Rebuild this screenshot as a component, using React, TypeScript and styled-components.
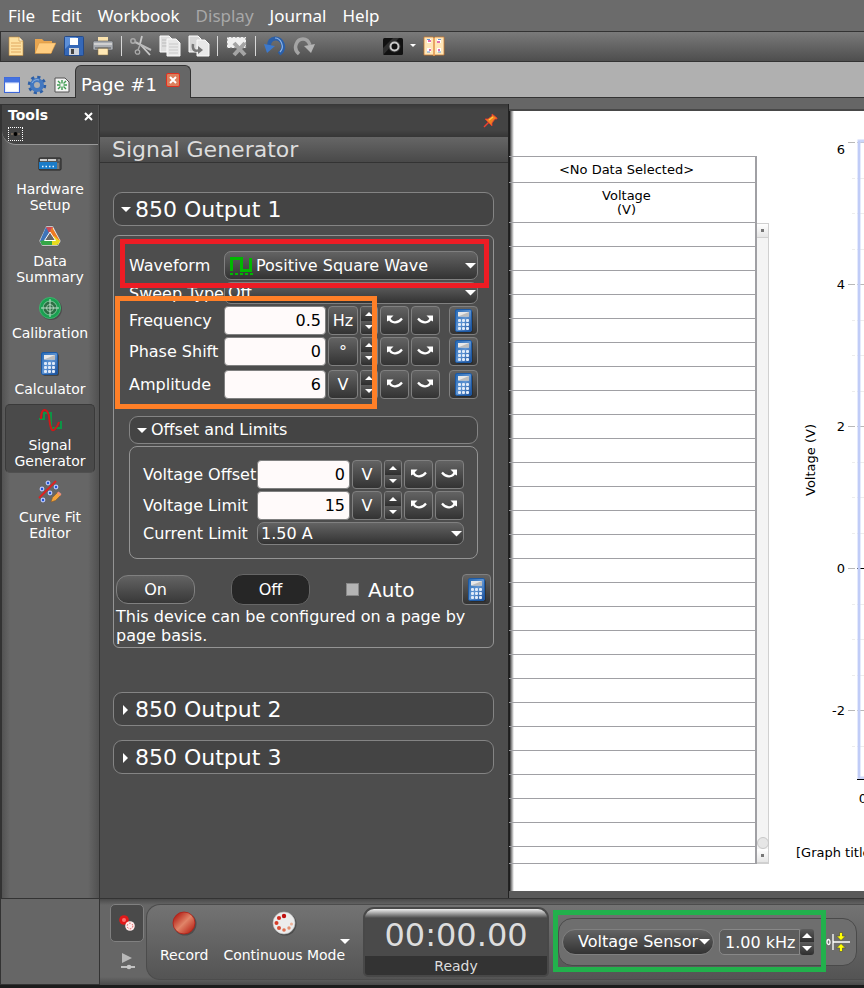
import React from "react";
import styled, { createGlobalStyle, css } from "styled-components";

const GlobalStyle = createGlobalStyle`
  * { box-sizing: border-box; }
  body {
    margin: 0;
    background: #333;
    color: #fff;
    font: 16px/19px "DejaVu Sans", sans-serif;
  }
  button, input, select { font: inherit; color: inherit; margin: 0; }
  svg { display: block; flex: none; }
`;

const raised = css`
  background: linear-gradient(#636363, #333);
  border: 1px solid #808080;
`;

/* ---------- page frame ---------- */

const Page = styled.div`
  display: flex;
  flex-direction: column;
  min-height: 100vh;
  overflow: hidden;
`;

const MenuBar = styled.nav`
  display: flex;
  gap: 16px;
  height: 31px;
  padding: 1px 8px 0;
  background: #6b6b6b;
`;

const MenuItem = styled.button`
  padding: 0;
  border: 0;
  background: none;
  font: 17px/28px "Noto Sans", "Open Sans", sans-serif;
  color: #fff;
  &:disabled { color: #a8a8a8; }
`;

const ToolBar = styled.div`
  display: flex;
  align-items: center;
  gap: 4px;
  height: 31px;
  padding: 0 2px 2px;
  border: 1px solid #333;
  border-right: 0;
  background: linear-gradient(#7a7a7a, #4e4e4e);
`;

const IconButton = styled.button<{ $narrow?: boolean }>`
  display: flex;
  justify-content: center;
  width: ${(p) => (p.$narrow ? 8 : 25)}px;
  padding: 0;
  border: 0;
  background: none;
`;

const Separator = styled.span`
  width: 1px;
  height: 20px;
  margin: 0 2px;
  background: #d8d8d8;
`;

const Spacer = styled.span`
  width: 56px;
`;

const TabBar = styled.div`
  display: flex;
  align-items: flex-end;
  height: 36px;
  padding-left: 3px;
  border-bottom: 1px solid #333;
  background: #b0b0b0;
`;

const TabTools = styled.div`
  display: flex;
  align-items: center;
  gap: 6px;
  width: 72px;
  height: 24px;
`;

const Tab = styled.div`
  display: flex;
  gap: 9px;
  height: 33px;
  margin-bottom: -1px;
  padding: 7px 10px 0 5px;
  border: 1px solid #333;
  border-bottom: 0;
  border-radius: 6px 6px 0 0;
  background: #666;
  font-size: 18px;
  line-height: 24px;
`;

const TabClose = styled.button`
  width: 14px;
  height: 14px;
  padding: 0;
  border: 1px solid #e03020;
  border-radius: 2px;
  background: #dc7f5c;
`;

const Workspace = styled.main`
  display: flex;
  flex: 1;
  min-height: 0;
  border-top: 6px solid #666;
`;

/* ---------- tools column ---------- */

const Tools = styled.aside`
  flex: 0 0 100px;
  padding: 0 1px 0 2px;
  border-top: 1px solid #333;
  border-right: 1px solid #333;
  background: linear-gradient(90deg, #333 2px, #535353 2px, #666 10px, #666 88px, #535353 98px);
`;

const ToolsHeader = styled.header`
  display: grid;
  grid-template-columns: 1fr auto;
  height: 40px;
  padding: 1px 5px 0 6px;
  border-bottom: 1px solid #999;
  border-bottom-left-radius: 14px;
  background: #444;
  font-weight: bold;
  font-size: 14px;
  line-height: 18px;
`;

const PlainButton = styled.button`
  display: flex;
  align-items: center;
  padding: 0;
  border: 0;
  background: none;
`;

const DottedBox = styled.span`
  width: 15px;
  height: 14px;
  padding: 4px 2px;
  border: 1px dotted #fff;
`;

const ToolList = styled.div`
  display: flex;
  flex-direction: column;
  gap: 3px;
  padding: 3px;
`;

const ToolButton = styled.button<{ $active?: boolean }>`
  display: flex;
  flex-direction: column;
  align-items: center;
  gap: 5px;
  padding: 3px 0;
  border: 1px solid ${(p) => (p.$active ? "#3a3a3a" : "transparent")};
  border-bottom-color: ${(p) => (p.$active ? "#505050" : "transparent")};
  border-radius: 5px;
  background: ${(p) => (p.$active ? "#4a4a4a" : "none")};
  font-size: 14px;
  line-height: 16px;
`;

/* ---------- signal generator panel ---------- */

const Panel = styled.section`
  flex: 0 0 409px;
  min-width: 0;
  border-right: 1px solid #222;
  background: #4d4d4d;
`;

const PanelTop = styled.div`
  display: flex;
  justify-content: flex-end;
  align-items: center;
  height: 33px;
  padding-right: 10px;
  background: linear-gradient(#383838, #444 6px, #444 26px, #363636);
`;

const PanelTitle = styled.h1`
  height: 26px;
  margin: 0;
  padding-left: 12px;
  border-bottom: 1px solid #333;
  background: linear-gradient(#666, #494949);
  color: #ddd;
  font-weight: normal;
  font-size: 22px;
  line-height: 26px;
`;

const PanelBody = styled.div`
  display: flex;
  flex-direction: column;
  padding: 29px 14px 0 13px;
`;

const Disclosure = styled.button<{ $small?: boolean }>`
  display: flex;
  align-items: center;
  gap: 4px;
  width: 100%;
  height: ${(p) => (p.$small ? 28 : 34)}px;
  padding: ${(p) => (p.$small ? 0 : 1)}px 7px 0;
  border: 1px solid #848484;
  border-radius: 9px;
  background: #444;
  font-size: ${(p) => (p.$small ? 16 : 22)}px;
  line-height: 26px;
`;

const Group = styled.div`
  position: relative;
  height: 413px;
  margin: 9px 0 44px;
  padding: 15px 15px 0;
  border: 1px solid #949494;
  border-radius: 6px;
`;

const SubGroup = styled.div`
  display: flex;
  flex-direction: column;
  gap: 2px;
  height: 113px;
  margin-top: 2px;
  padding: 13px;
  border: 1px solid #949494;
  border-radius: 8px;
`;

const Stack = styled.div`
  display: flex;
  flex-direction: column;
  gap: 2px;
  margin-bottom: 17px;
`;

const Row = styled.div<{ $spaced?: boolean }>`
  display: flex;
  align-items: center;
  gap: 2px;
  margin-top: ${(p) => (p.$spaced ? 2 : 0)}px;
`;

const Label = styled.label<{ $wide?: boolean }>`
  flex: none;
  width: ${(p) => (p.$wide ? 112 : 93)}px;
  white-space: nowrap;
`;

const SelectBox = styled.div<{ $height: number; $pill?: boolean }>`
  display: grid;
  flex: 1;
  align-items: center;
  height: ${(p) => p.$height}px;
  ${raised}
  border-radius: ${(p) => (p.$pill ? 13 : 7)}px;
  & > * { grid-area: 1 / 1; }
  & > svg { pointer-events: none; }
`;

const Select = styled.select<{ $indent: number }>`
  appearance: none;
  width: 100%;
  height: 20px;
  padding: 0 12px 0 ${(p) => p.$indent}px;
  border: 0;
  outline: 0;
  background: none;
  line-height: 20px;
  option { background: #444; }
`;

const SelectArrow = styled.svg`
  justify-self: end;
`;

const WaveIcon = styled.svg`
  margin-left: 5px;
`;

const NumberField = styled.input`
  flex: 1;
  width: 0;
  min-width: 0;
  height: 29px;
  padding: 0 4px;
  border: 1px solid #808080;
  border-radius: 4px;
  outline: 0;
  background: #fffafa;
  color: #000;
  text-align: right;
`;

const Square = styled.button<{ $gap?: boolean; $tall?: boolean }>`
  display: flex;
  flex: none;
  align-items: center;
  justify-content: center;
  width: 29px;
  height: ${(p) => (p.$tall ? 31 : 29)}px;
  margin-left: ${(p) => (p.$gap ? 7 : 0)}px;
  padding: 0;
  ${raised}
  border-radius: 4px;
`;

const Unit = styled(Square)`
  width: 30px;
`;

const SpinBox = styled.span<{ $wide?: boolean }>`
  display: flex;
  flex: none;
  flex-direction: column;
  width: ${(p) => (p.$wide ? 14 : 18)}px;
  height: ${(p) => (p.$wide ? 26 : 29)}px;
  border: ${(p) => (p.$wide ? "0" : "1px solid #808080")};
  border-radius: 3px;
  overflow: hidden;
`;

const SpinButton = styled.button`
  display: flex;
  flex: 1;
  align-items: center;
  justify-content: center;
  padding: 0;
  border: 0;
  background: linear-gradient(#5c5c5c, #2e2e2e);
`;

const Actions = styled.div`
  display: flex;
  align-items: center;
  margin: 15px -13px 0;
`;

const PillButton = styled.button<{ $pressed?: boolean }>`
  width: 79px;
  height: ${(p) => (p.$pressed ? 31 : 29)}px;
  margin-right: 36px;
  padding: 0;
  border: 1px solid ${(p) => (p.$pressed ? "#666" : "#808080")};
  border-radius: 12px;
  background: ${(p) => (p.$pressed ? "#262626" : "linear-gradient(#636363, #383838)")};
`;

const CheckLabel = styled.label`
  display: flex;
  flex: 1;
  align-items: center;
  gap: 9px;
  font-size: 20px;
  line-height: 24px;
`;

const Checkbox = styled.input`
  appearance: none;
  width: 13px;
  height: 13px;
  border: 1px solid #888;
  background: #b4b4b4;
`;

const Note = styled.p`
  margin: 2px -13px 0;
`;

const Outputs = styled.div`
  display: flex;
  flex-direction: column;
  gap: 14px;
`;

/* coloured frames that lie over the controls they point out */
const Frame = styled.span<{ $color: string }>`
  position: absolute;
  border: 5px solid ${(p) => p.$color};
  pointer-events: none;
`;

const WaveFrame = styled(Frame)`
  top: 3px;
  left: 6px;
  right: 4px;
  height: 49px;
`;

const ValuesFrame = styled(Frame)`
  top: 60px;
  left: 1px;
  width: 262px;
  height: 113px;
`;

const RateFrame = styled(Frame)`
  inset: -9px 30px -7px -6px;
`;

/* ---------- page canvas ---------- */

const Canvas = styled.section`
  display: flex;
  flex: 1;
  min-width: 0;
  overflow: hidden;
  border-top: 2px solid #484848;
  border-bottom: 7px solid #5a5a5a;
  background: linear-gradient(90deg, #000, #777 2px, #fff 5px);
  margin-top: 5px;
  box-shadow: 0 -5px 0 #666;
  color: #000;
  font-size: 13px;
  line-height: 14px;
`;

const DataTable = styled.table`
  flex: none;
  width: 259px;
  height: 708px;
  margin: 45px 0 0 -11px;
  border-collapse: collapse;
  border-right: 2px solid #a0a0a4;
  align-self: flex-start;
  th, td { padding: 0; border-top: 1px solid #a0a0a4; border-bottom: 1px solid #a0a0a4; font-weight: normal; }
`;

const TableRow = styled.tr<{ $height: number }>`
  height: ${(p) => p.$height}px;
`;

const ScrollTrack = styled.div`
  display: flex;
  flex: none;
  flex-direction: column;
  align-items: center;
  width: 12px;
  height: 641px;
  margin-top: 112px;
  border: 1px solid #d0d0d0;
  border-left: 0;
  background: #f4f4f4;
`;

const ScrollEnd = styled.button`
  display: flex;
  align-items: center;
  justify-content: center;
  width: 100%;
  height: 14px;
  padding: 0;
  border: 0;
  border-bottom: 1px solid #d0d0d0;
  background: linear-gradient(#fff, #e6e6e6);
`;

const ScrollThumb = styled.span`
  width: 12px;
  height: 12px;
  margin-top: auto;
  border: 1px solid #c8c8c8;
  border-radius: 6px;
  background: #e6e6e6;
`;

const Graph = styled.figure`
  flex: 1;
  min-width: 0;
  margin: 0;
  overflow: hidden;
  text { font-size: 13px; }
`;

const GraphTitle = styled.figcaption`
  padding: 35px 0 0 27px;
  white-space: nowrap;
`;

/* ---------- control bar ---------- */

const ControlBar = styled.footer`
  display: flex;
  height: 90px;
  border-top: 1px solid #333;
  border-bottom: 3px solid #1c1c1c;
`;

const Corner = styled.div`
  flex: 0 0 100px;
  border: 1px solid #333;
  border-top: 0;
  background: #666;
`;

const Controls = styled.div`
  display: flex;
  flex: 1;
  min-width: 0;
  padding: 5px 0 5px 10px;
  background: linear-gradient(#4a4a4a, #666 6px, #666 78px, #4a4a4a);
`;

const ModeColumn = styled.div`
  display: flex;
  flex-direction: column;
  align-items: center;
  gap: 9px;
  width: 36px;
`;

const ModeButton = styled.button`
  display: flex;
  align-items: center;
  justify-content: center;
  width: 34px;
  height: 38px;
  margin-right: 2px;
  border: 1px solid #808080;
  border-radius: 5px;
  background: #4a4a4a;
  padding: 0;
`;

const RecordGroup = styled.div`
  display: flex;
  flex: 1;
  min-width: 0;
  align-items: flex-start;
  border: 1px solid #4c4c4c;
  border-right: 0;
  border-radius: 14px 0 0 14px;
  background: linear-gradient(#737373, #545454);
`;

const BigButton = styled.button`
  display: flex;
  flex-direction: column;
  align-items: center;
  gap: 11px;
  margin: 5px 2px 0 13px;
  padding: 0;
  border: 0;
  background: none;
  font-size: 14px;
  line-height: 17px;
  white-space: nowrap;
`;

const MenuArrow = styled(PlainButton)`
  margin: 34px 13px 0 -7px;
`;

const Timer = styled.div`
  flex: none;
  width: 186px;
  height: 70px;
  margin-top: 2px;
  border: 2px solid #484848;
  border-radius: 11px 11px 5px 5px;
  background: #4a4a4a;
  overflow: hidden;
  text-align: center;
  color: #ddd;
`;

const TimerValue = styled.div`
  height: 47px;
  padding-top: 7px;
  background: linear-gradient(#eee, #bbb 3px, #4a4a4a 9px);
  font-size: 32px;
  line-height: 38px;
`;

const TimerState = styled.div`
  height: 20px;
  background: #333;
  font-size: 14px;
  line-height: 20px;
`;

const RateGroup = styled.div`
  position: relative;
  display: flex;
  align-items: center;
  flex: none;
  width: 299px;
  height: 48px;
  margin: 13px 0 0 9px;
  padding: 0 6px 0 3px;
  border: 1px solid #4a4a4a;
  border-radius: 14px;
  background: #6e6e6e;
`;

const SensorBox = styled(SelectBox)`
  flex: 0 0 152px;
  padding-right: 2px;
`;

const RateField = styled.div`
  display: flex;
  width: 96px;
  height: 26px;
  margin: 0 12px 0 5px;
`;

const RateInput = styled.input`
  flex: 1;
  width: 0;
  min-width: 0;
  padding: 0 0 0 5px;
  border: 1px solid #888;
  border-radius: 5px 0 0 5px;
  outline: 0;
  background: #5c5c5c;
`;

/* ---------- drawings ---------- */

const Triangle = ({ dir = "down", w = 10 }: { dir?: "down" | "up" | "right"; w?: number }) => {
  const h = w / 2;
  if (dir === "right")
    return <svg width={w} height={w}><path d={`M2 0L${h + 2} ${h}L2 ${w}Z`} fill="#fff" /></svg>;
  return (
    <svg width={w} height={h}>
      <path d={dir === "down" ? `M0 0H${w}L${h} ${h}Z` : `M0 ${h}H${w}L${h} 0Z`} fill="#fff" />
    </svg>
  );
};

const CurvedArrow = ({ flip }: { flip?: boolean }) => (
  <svg width="17" height="13" viewBox="0 0 17 13">
    <g transform={flip ? "matrix(-1 0 0 1 17 0)" : undefined}>
      <path d="M3 4C5.500 9.500 11.500 10 16 4.500" fill="none" stroke="#fff" strokeWidth="2.200" />
      <path d="M1 1.500H7.500L5.500 3.500L3 6.500L1 7.500Z" fill="#fff" />
    </g>
  </svg>
);

const CalcIcon = () => (
  <svg width="18" height="24" viewBox="0 0 18 24">
    <defs>
      <linearGradient id="calcBody" x1="0" x2="1" y2="1">
        <stop offset="0" stopColor="#2468b4" />
        <stop offset=".5" stopColor="#5f94d2" />
        <stop offset="1" stopColor="#174c98" />
      </linearGradient>
    </defs>
    <rect x="2" y="2" width="16" height="22" rx="2" fill="#222" opacity=".5" />
    <rect x=".5" y=".5" width="16" height="22" rx="1.500" fill="url(#calcBody)" stroke="#1d5aa5" />
    <path d="M3 3H14V7.500H3Z" fill="#e8e8e8" />
    <path d="M3 7.500L14 3V7.500Z" fill="#bcbcbc" />
    {[10, 14, 18].map((y) => [3, 7, 11].map((x) => (
      <rect key={`${x}-${y}`} x={x} y={y} width="3" height="3" rx="1" fill="#dfeaf8" />
    )))}
  </svg>
);

const HardwareIcon = () => (
  <svg width="24" height="24" viewBox="0 0 24 24">
    <rect x="1" y="6" width="22" height="12" rx="1" fill="#555" stroke="#222" />
    <path d="M2 7H9V9H2ZM10 7H18V9H10Z" fill="#d0d0d0" />
    <rect x="1" y="10" width="18" height="7" fill="#1b7cc8" />
    <path d="M4 14.500H17" stroke="#e4f2ff" strokeWidth="1.500" strokeDasharray="1.500 2" />
    <path d="M20 8H22M20 11V17" stroke="#999" />
  </svg>
);

const DataIcon = () => (
  <svg width="24" height="24" viewBox="0 0 24 24">
    <path d="M8 2H15L23 17L20 22H4L1 17Z" fill="#f2f2f2" stroke="#555" strokeWidth=".6" />
    <path d="M8 3L12 8L7 17L4 21L2 17Z" fill="#3d73b8" />
    <path d="M8 3H15L13 9L11 9Z" fill="#c94a58" />
    <path d="M14 3L22 17H16L12 8Z" fill="#ec7a22" />
    <path d="M16 12L22 17L20 21L15 17Z" fill="#f5d318" />
    <path d="M7 16H17L20 21H4L2 17Z" fill="#35a747" />
    <path d="M14 16H22L19 21H14Z" fill="#e8dc20" />
    <path d="M12 8L6.500 16.500H17.500Z" fill="#666" stroke="#fff" />
  </svg>
);

const CalibrationIcon = () => (
  <svg width="24" height="24" viewBox="0 0 24 24">
    <circle cx="13" cy="13" r="11" fill="#333" opacity=".5" />
    <circle cx="12" cy="12" r="10.500" fill="#19a050" stroke="#3cb56c" />
    <circle cx="12" cy="12" r="7" fill="#2d6d44" stroke="#7fc49a" />
    <circle cx="12" cy="12" r="3.500" fill="none" stroke="#98c8a8" />
    <path d="M12 3V21M3 12H21" stroke="#c4e0ce" />
  </svg>
);

const SignalIcon = () => (
  <svg width="24" height="24" viewBox="0 0 24 24" fill="none" strokeWidth="2">
    <path d="M1 11H6V5H13V20H23V13" stroke="#0d9446" />
    <path d="M3 11C3 0 9 -1 11 8C12 20 14 25 17 21C19 19 20 17 21 14" stroke="#d01818" />
  </svg>
);

const CurveIcon = () => (
  <svg width="24" height="24" viewBox="0 0 24 24">
    {[[10, 3], [4, 9], [18, 7], [12, 13], [5, 20]].map(([x, y]) => (
      <circle key={x} cx={x} cy={y} r="1.800" fill="#2456d8" stroke="#b8c8ff" strokeWidth="1.200" />
    ))}
    <path d="M1 18L18 1" stroke="#e02020" strokeWidth="1.800" />
    <path d="M13 22L14.500 17.500L20 12L23 15L17.500 20.500Z" fill="#f4a43a" stroke="#8a5a28" strokeWidth=".6" />
    <path d="M19 13L20.500 11.500L23.500 14L22 16Z" fill="#e89080" />
  </svg>
);

const Svg22 = ({ children }: { children: React.ReactNode }) => (
  <svg width="22" height="22" viewBox="0 0 22 22">{children}</svg>
);

const NewIcon = () => (
  <Svg22>
    <path d="M4 2H14L18 6V20.500H4Z" fill="#fde0a0" stroke="#c08a3c" strokeWidth=".6" />
    <path d="M14 2V6H18" fill="#fff4d8" stroke="#c08a3c" strokeWidth=".6" />
    <path d="M6 8H16M6 11H16M6 14H16M6 17H16" stroke="#e0a860" />
  </Svg22>
);
const OpenIcon = () => (
  <Svg22>
    <path d="M1 4H8L10 6H18V18H1Z" fill="#e9a650" />
    <path d="M5 8H22L17 18.500H1Z" fill="#ffcd80" stroke="#d79038" strokeWidth=".5" />
  </Svg22>
);
const SaveIcon = () => (
  <Svg22>
    <rect x="1.500" y="1.500" width="19" height="19" rx="1" fill="#3568b8" stroke="#254a88" />
    <path d="M2 14L14 2H2Z" fill="#5c8fd8" />
    <rect x="7" y="3" width="8" height="7" fill="#fff" />
    <rect x="6" y="13" width="10" height="7" fill="#d0d4dc" />
    <rect x="8" y="14" width="3" height="5" fill="#444" />
  </Svg22>
);
const PrintIcon = () => (
  <Svg22>
    <path d="M6 2H16V8H6Z" fill="#fbe3ae" />
    <rect x="1" y="6" width="20" height="9" rx="1.500" fill="#a9adb3" stroke="#555" strokeWidth=".6" />
    <path d="M2 9H20" stroke="#d0d0d0" strokeWidth="2" />
    <path d="M6 13H16V20H6Z" fill="#ffe8b4" stroke="#887040" strokeWidth=".5" />
    <path d="M3 13H19" stroke="#555" />
  </Svg22>
);
const CutIcon = () => (
  <Svg22>
    <path d="M12 1L10 9L20 20" fill="none" stroke="#c8c8c8" strokeWidth="1.800" />
    <path d="M5 7L21 15" stroke="#bbb" strokeWidth="2" />
    <path d="M10 10L8 15" stroke="#aaa" strokeWidth="1.500" />
    <circle cx="3" cy="6" r="2.200" fill="none" stroke="#aaa" strokeWidth="1.500" />
    <circle cx="7.500" cy="17" r="2.200" fill="none" stroke="#aaa" strokeWidth="1.300" />
  </Svg22>
);
const CopyIcon = () => (
  <Svg22>
    <path d="M1 1H10L13 4V17H1Z" fill="#dedede" stroke="#fff" />
    <path d="M3 5H11M3 8H11M3 11H11" stroke="#bbb" />
    <path d="M8 4H17L21 8V21H8Z" fill="#e8e8e8" stroke="#fafafa" />
    <path d="M10 9H19M10 12H19M10 15H19M10 18H19" stroke="#c8c8c8" />
  </Svg22>
);
const PasteIcon = () => (
  <Svg22>
    <path d="M1 1H10L13 4V17H1Z" fill="#d6d6d6" stroke="#fff" />
    <path d="M9 5H17L21 9V21H9Z" fill="#e8e8e8" stroke="#fafafa" />
    <path d="M5 9C4 15 7 17 11 15" fill="none" stroke="#777" strokeWidth="2.500" />
    <path d="M10 11L15 15L10 19Z" fill="#777" />
  </Svg22>
);
const DeleteIcon = () => (
  <Svg22>
    <rect x="1" y="2" width="19" height="11" fill="#f0f0f0" stroke="#777" strokeDasharray="2 2" />
    <path d="M8 8L19 20M19 8L8 20" stroke="#a4a4a4" strokeWidth="4" />
  </Svg22>
);
const UndoIcon = () => (
  <Svg22>
    <path d="M15 19C23 13 18 3 11 3.500C7 4 5 7 5 11" fill="none" stroke="#2b5fa8" strokeWidth="4" />
    <path d="M16 17C21 12 17 3 11 3" fill="none" stroke="#8cb4e8" strokeWidth="1.200" />
    <path d="M0 9L11 11L3 18Z" fill="#3d79cc" />
  </Svg22>
);
const RedoIcon = () => (
  <Svg22>
    <path d="M6 19C-1 13 4 4 10 4C14 4 16 7 17 10" fill="none" stroke="#a4a4a4" strokeWidth="3.500" />
    <path d="M11 11L22 9L18 18Z" fill="#b4b4b4" />
  </Svg22>
);
const CameraIcon = () => (
  <Svg22>
    <path d="M4 1H10V4H4Z" fill="#777" />
    <rect x="1" y="3" width="20" height="17" rx="1.500" fill="#111" />
    <path d="M1 20V13L11 3H17Z" fill="#444" opacity=".6" />
    <circle cx="12.500" cy="11.500" r="6" fill="#333" />
    <circle cx="12.500" cy="11.500" r="4" fill="#111" stroke="#c8c8c8" strokeWidth="2" />
  </Svg22>
);
const BookIcon = () => (
  <Svg22>
    <path d="M1 2H10L11 3L12 2H21V20H12L11 21L10 20H1Z" fill="#ffe6b8" stroke="#c87a30" strokeWidth=".8" />
    <path d="M11 3V21" stroke="#e09048" strokeWidth="1.500" />
    <path d="M4 4H8V8H4ZM14 4H18V8H14ZM4 13H8V17H4ZM14 13H18V17H14Z" fill="#fff" />
    <path d="M5 6H8M14 7H17M6 15H8M15 15H17" stroke="#e070b0" strokeWidth="2" />
    <path d="M4 4.500H7M15 4.500H18M4 17H7M15 17H18" stroke="#6898d8" />
  </Svg22>
);

const WindowIcon = () => (
  <svg width="18" height="18" viewBox="0 0 18 18">
    <rect x="1.500" y="1.500" width="15" height="15" fill="#e8eeff" stroke="#3c66d8" />
    <rect x="1.500" y="1.500" width="15" height="5" fill="#4472e0" />
    <rect x="3" y="8" width="12" height="7" fill="#fff" />
  </svg>
);
const GearIcon = () => (
  <svg width="20" height="20" viewBox="0 0 20 20">
    <circle cx="10" cy="10" r="7.500" fill="none" stroke="#2d5fa6" strokeWidth="3.500" strokeDasharray="3 2.890" />
    <circle cx="10" cy="10" r="5" fill="none" stroke="#4378c0" strokeWidth="4" />
    <path d="M5 8A5.500 5.500 0 0 1 12 5" fill="none" stroke="#8db4e4" />
  </svg>
);
const BurstIcon = () => (
  <svg width="18" height="18" viewBox="0 0 18 18">
    <path d="M2 2H12L16 6V16H2Z" fill="#f4f4f4" stroke="#555" />
    <path d="M9 4V7.500M9 10.500V14M4 9H7.500M10.500 9H14M5 5L7.500 7.500M10.500 10.500L13 13M5 13L7.500 10.500M10.500 7.500L13 5" stroke="#3c9c50" strokeWidth="1.400" />
  </svg>
);
const PinIcon = () => (
  <svg width="15" height="15" viewBox="0 0 15 15">
    <path d="M1 14L6 9" stroke="#f04030" strokeWidth="1.500" />
    <path d="M2 6H5L9 3V1L14 5V6L12 6L9 10V13Z" fill="#f08020" stroke="#e83830" strokeWidth=".8" />
    <path d="M6 7L10 4" stroke="#ffc840" strokeWidth="1.500" />
  </svg>
);
const RecordIcon = () => (
  <svg width="26" height="26" viewBox="0 0 26 26">
    <defs>
      <linearGradient id="rec" x1="0" x2="1" y2="1">
        <stop offset=".1" stopColor="#b01810" />
        <stop offset=".5" stopColor="#e08468" />
        <stop offset=".9" stopColor="#b82418" />
      </linearGradient>
    </defs>
    <circle cx="14" cy="14" r="11.500" fill="#333" opacity=".5" />
    <circle cx="13" cy="13" r="11" fill="url(#rec)" stroke="#b02018" strokeWidth=".8" />
  </svg>
);
const ModeIcon = () => (
  <svg width="26" height="26" viewBox="0 0 26 26">
    <circle cx="14" cy="14" r="11.500" fill="#333" opacity=".5" />
    <circle cx="13" cy="13" r="11" fill="#ececec" stroke="#bbb" strokeWidth=".6" />
    {[[13, 6, "#c01010", 2.2], [8, 8, "#d02c20", 2.1], [5.500, 13, "#d43c28", 2], [8, 18, "#d85038", 2], [13, 20, "#e07050", 1.8], [18, 18, "#e49070", 1.7], [20.500, 14, "#ecb098", 1.5]].map(([x, y, c, r]) => (
      <circle key={`${x}${y}`} cx={x} cy={y} r={r} fill={String(c)} />
    ))}
  </svg>
);
const RecordModeIcon = () => (
  <svg width="18" height="18" viewBox="0 0 18 18">
    <circle cx="6" cy="6" r="4.800" fill="#e01818" />
    <circle cx="6" cy="6" r="2" fill="#f87070" />
    <circle cx="12" cy="12" r="4.800" fill="#ffecec" />
    <circle cx="12" cy="12" r="2.800" fill="none" stroke="#e85050" strokeDasharray="1.500 1.500" />
  </svg>
);
const PlaybackIcon = () => (
  <svg width="16" height="20" viewBox="0 0 16 20">
    <path d="M2 2L12 7L2 12Z" fill="#b8b8b8" />
    <path d="M1 16H15" stroke="#e0e0e0" strokeWidth="1.500" />
    <circle cx="9" cy="16" r="2.300" fill="#c8c8c8" />
  </svg>
);
const ZeroIcon = () => (
  <svg width="24" height="20" viewBox="0 0 24 20">
    <ellipse cx="2.500" cy="10" rx="1.500" ry="2.500" fill="none" stroke="#fff" strokeWidth="1.300" />
    <path d="M7 2V18M7 10H24" stroke="#fff" strokeWidth="1.300" />
    <path d="M13.500 .5H16.500V4H19.500L15 8.500L10.500 4H13.500Z" fill="#ff0" stroke="#554" strokeWidth=".7" />
    <path d="M13.500 19.500H16.500V16H19.500L15 11.500L10.500 16H13.500Z" fill="#ff0" stroke="#554" strokeWidth=".7" />
  </svg>
);

const ticks = [
  { y: 31, label: "6", at: 43 },
  { y: 173, label: "4", at: 178 },
  { y: 315, label: "2", at: 320 },
  { y: 457, label: "0", at: 462 },
  { y: 599, label: "-2", at: 604 },
];
const plotLeft = 88;

const Chart = () => (
  <svg width="100%" height="700">
    {ticks.map(({ y, label, at }) => (
      <g key={label}>
        <path d={`M79 ${y}.5H86M${plotLeft} ${y}.5H900`} stroke="#b8b8b8" />
        {(label === "-2" ? [36] : [36, 71, 107]).map((d) => (
          <path key={d} d={`M83 ${y + d}.5H86M${plotLeft} ${y + d}.5H900`} stroke="#ececec" />
        ))}
        <text x="76" y={at} textAnchor="end">{label}</text>
      </g>
    ))}
    <path d="M88 457.500H900" stroke="#000" />
    <path d="M900 30H90V667H900" fill="none" stroke="#ccd6fa" strokeWidth="3" />
    <path d="M90 30V667" stroke="#b4c2f4" />
    <path d="M88 668.500H900" stroke="#000" />
    <text x="94" y="692" textAnchor="middle">0</text>
    <text textAnchor="middle" transform="translate(46 349) rotate(-90)">Voltage (V)</text>
  </svg>
);

/* ---------- parts ---------- */

const Spin = ({ name, wide }: { name: string; wide?: boolean }) => (
  <SpinBox $wide={wide}>
    <SpinButton aria-label={`Increase ${name}`}><Triangle dir="up" w={wide ? 10 : 8} /></SpinButton>
    <SpinButton aria-label={`Decrease ${name}`}><Triangle w={wide ? 10 : 8} /></SpinButton>
  </SpinBox>
);

type ValueRowProps = { name: string; value: string; unit: string; calc?: boolean; wide?: boolean; spaced?: boolean };

const ValueRow = ({ name, value, unit, calc, wide, spaced }: ValueRowProps) => {
  const id = name.toLowerCase().replace(" ", "-");
  return (
    <Row $spaced={spaced}>
      <Label htmlFor={id} $wide={wide}>{name}</Label>
      <NumberField id={id} defaultValue={value} />
      <Unit>{unit}</Unit>
      <Spin name={name} />
      <Square aria-label={`Previous ${name}`}><CurvedArrow /></Square>
      <Square aria-label={`Next ${name}`}><CurvedArrow flip /></Square>
      {calc && <Square $gap aria-label={`${name} calculator`}><CalcIcon /></Square>}
    </Row>
  );
};

const Arrow = () => (
  <SelectArrow width="12" height="6"><path d="M0 0H11L5.500 5.500Z" fill="#fff" /></SelectArrow>
);

const tools = [
  { lines: ["Hardware", "Setup"], Icon: HardwareIcon },
  { lines: ["Data", "Summary"], Icon: DataIcon },
  { lines: ["Calibration"], Icon: CalibrationIcon },
  { lines: ["Calculator"], Icon: CalcIcon },
  { lines: ["Signal", "Generator"], Icon: SignalIcon, active: true },
  { lines: ["Curve Fit", "Editor"], Icon: CurveIcon },
];

const toolbarGroups = [
  [["New", NewIcon], ["Open", OpenIcon], ["Save", SaveIcon], ["Print", PrintIcon]],
  [["Cut", CutIcon], ["Copy", CopyIcon], ["Paste", PasteIcon]],
  [["Delete", DeleteIcon]],
  [["Undo", UndoIcon], ["Redo", RedoIcon]],
] as [string, React.FC][][];

export default function App() {
  return (
    <Page>
      <GlobalStyle />
      <MenuBar>
        {["File", "Edit", "Workbook", "Display", "Journal", "Help"].map((m) => (
          <MenuItem key={m} disabled={m === "Display"}>{m}</MenuItem>
        ))}
      </MenuBar>
      <ToolBar>
        {toolbarGroups.map((group, i) => (
          <React.Fragment key={i}>
            {i > 0 && <Separator />}
            {group.map(([name, Icon]) => (
              <IconButton key={name} aria-label={name}><Icon /></IconButton>
            ))}
          </React.Fragment>
        ))}
        <Spacer />
        <IconButton aria-label="Snapshot"><CameraIcon /></IconButton>
        <IconButton $narrow aria-label="Snapshot options"><Triangle w={6} /></IconButton>
        <IconButton aria-label="Journal"><BookIcon /></IconButton>
      </ToolBar>
      <TabBar>
        <TabTools>
          <PlainButton aria-label="New page"><WindowIcon /></PlainButton>
          <PlainButton aria-label="Page settings"><GearIcon /></PlainButton>
          <PlainButton aria-label="Page options"><BurstIcon /></PlainButton>
        </TabTools>
        <Tab>
          Page #1
          <TabClose aria-label="Close page">
            <svg width="12" height="12"><path d="M3 3L9 9M9 3L3 9" stroke="#fff" strokeWidth="2" /></svg>
          </TabClose>
        </Tab>
      </TabBar>

      <Workspace>
        <Tools>
          <ToolsHeader>
            Tools
            <PlainButton aria-label="Close tools">
              <svg width="9" height="9"><path d="M1 1L8 8M8 1L1 8" stroke="#fff" strokeWidth="2" /></svg>
            </PlainButton>
            <DottedBox>
              <svg width="9" height="4"><path d="M0 2H9" stroke="#a08870" /><circle cx="4.500" cy="2" r="2" fill="#000" /></svg>
            </DottedBox>
          </ToolsHeader>
          <ToolList>
            {tools.map(({ lines, Icon, active }) => (
              <ToolButton key={lines[0]} $active={active}>
                <Icon />
                <span>{lines.map((l, i) => <React.Fragment key={l}>{i > 0 && <br />}{l}</React.Fragment>)}</span>
              </ToolButton>
            ))}
          </ToolList>
        </Tools>

        <Panel>
          <PanelTop>
            <PlainButton aria-label="Unpin panel"><PinIcon /></PlainButton>
          </PanelTop>
          <PanelTitle>Signal Generator</PanelTitle>
          <PanelBody>
            <Disclosure aria-expanded><Triangle />850 Output 1</Disclosure>
            <Group>
              <Stack>
                <Row>
                  <Label htmlFor="waveform">Waveform</Label>
                  <SelectBox $height={29}>
                    <Select id="waveform" $indent={31}><option>Positive Square Wave</option></Select>
                    <WaveIcon width="24" height="18">
                      <path d="M1.500 14V1.500H11.500V13.500H20.500V1" fill="none" stroke="#00b800" strokeWidth="3" />
                      <path d="M0 17H24" stroke="#00b800" strokeWidth="2" strokeDasharray="3 2" />
                    </WaveIcon>
                    <Arrow />
                  </SelectBox>
                </Row>
                <Row>
                  <Label htmlFor="sweep">Sweep Type</Label>
                  <SelectBox $height={22}>
                    <Select id="sweep" $indent={3}><option>Off</option></Select>
                    <Arrow />
                  </SelectBox>
                </Row>
                <ValueRow name="Frequency" value="0.5" unit="Hz" calc />
                <ValueRow name="Phase Shift" value="0" unit="°" calc />
                <ValueRow name="Amplitude" value="6" unit="V" calc spaced />
              </Stack>
              <Disclosure $small aria-expanded><Triangle />Offset and Limits</Disclosure>
              <SubGroup>
                <ValueRow name="Voltage Offset" value="0" unit="V" wide />
                <ValueRow name="Voltage Limit" value="15" unit="V" wide />
                <Row>
                  <Label htmlFor="current-limit" $wide>Current Limit</Label>
                  <SelectBox $height={23}>
                    <Select id="current-limit" $indent={3}><option>1.50 A</option></Select>
                    <Arrow />
                  </SelectBox>
                </Row>
              </SubGroup>
              <Actions>
                <PillButton>On</PillButton>
                <PillButton $pressed aria-pressed>Off</PillButton>
                <CheckLabel><Checkbox type="checkbox" />Auto</CheckLabel>
                <Square $tall aria-label="Output calculator"><CalcIcon /></Square>
              </Actions>
              <Note>This device can be configured on a page by page basis.</Note>
              <WaveFrame $color="#ed1c24" />
              <ValuesFrame $color="#ff7f27" />
            </Group>
            <Outputs>
              <Disclosure><Triangle dir="right" />850 Output 2</Disclosure>
              <Disclosure><Triangle dir="right" />850 Output 3</Disclosure>
            </Outputs>
          </PanelBody>
        </Panel>

        <Canvas>
          <DataTable>
            <thead>
              <TableRow $height={26}><th>&lt;No Data Selected&gt;</th></TableRow>
              <TableRow $height={40}><th>Voltage<br />(V)</th></TableRow>
            </thead>
            <tbody>
              {Array.from({ length: 26 }, (_, i) => <TableRow key={i} $height={24}><td /></TableRow>)}
              <TableRow $height={17}><td /></TableRow>
            </tbody>
          </DataTable>
          <ScrollTrack>
            <ScrollEnd aria-label="Scroll up"><svg width="3" height="3"><rect width="3" height="3" fill="#777" /></svg></ScrollEnd>
            <ScrollThumb />
            <ScrollEnd aria-label="Scroll down"><svg width="3" height="3"><rect width="3" height="3" fill="#777" /></svg></ScrollEnd>
          </ScrollTrack>
          <Graph>
            <Chart />
            <GraphTitle>[Graph title]</GraphTitle>
          </Graph>
        </Canvas>
      </Workspace>

      <ControlBar>
        <Corner />
        <Controls>
          <ModeColumn>
            <ModeButton aria-label="Record mode"><RecordModeIcon /></ModeButton>
            <PlainButton aria-label="Playback mode"><PlaybackIcon /></PlainButton>
          </ModeColumn>
          <RecordGroup>
            <BigButton><RecordIcon />Record</BigButton>
            <BigButton><ModeIcon />Continuous Mode</BigButton>
            <MenuArrow aria-label="Recording modes"><Triangle /></MenuArrow>
            <Timer>
              <TimerValue>00:00.00</TimerValue>
              <TimerState>Ready</TimerState>
            </Timer>
            <RateGroup>
              <SensorBox $height={26} $pill>
                <Select aria-label="Sensor" $indent={15}><option>Voltage Sensor</option></Select>
                <Arrow />
              </SensorBox>
              <RateField>
                <RateInput aria-label="Sample rate" defaultValue="1.00 kHz" />
                <Spin name="sample rate" wide />
              </RateField>
              <PlainButton aria-label="Zero sensor"><ZeroIcon /></PlainButton>
              <RateFrame $color="#22b14c" />
            </RateGroup>
          </RecordGroup>
        </Controls>
      </ControlBar>
    </Page>
  );
}
